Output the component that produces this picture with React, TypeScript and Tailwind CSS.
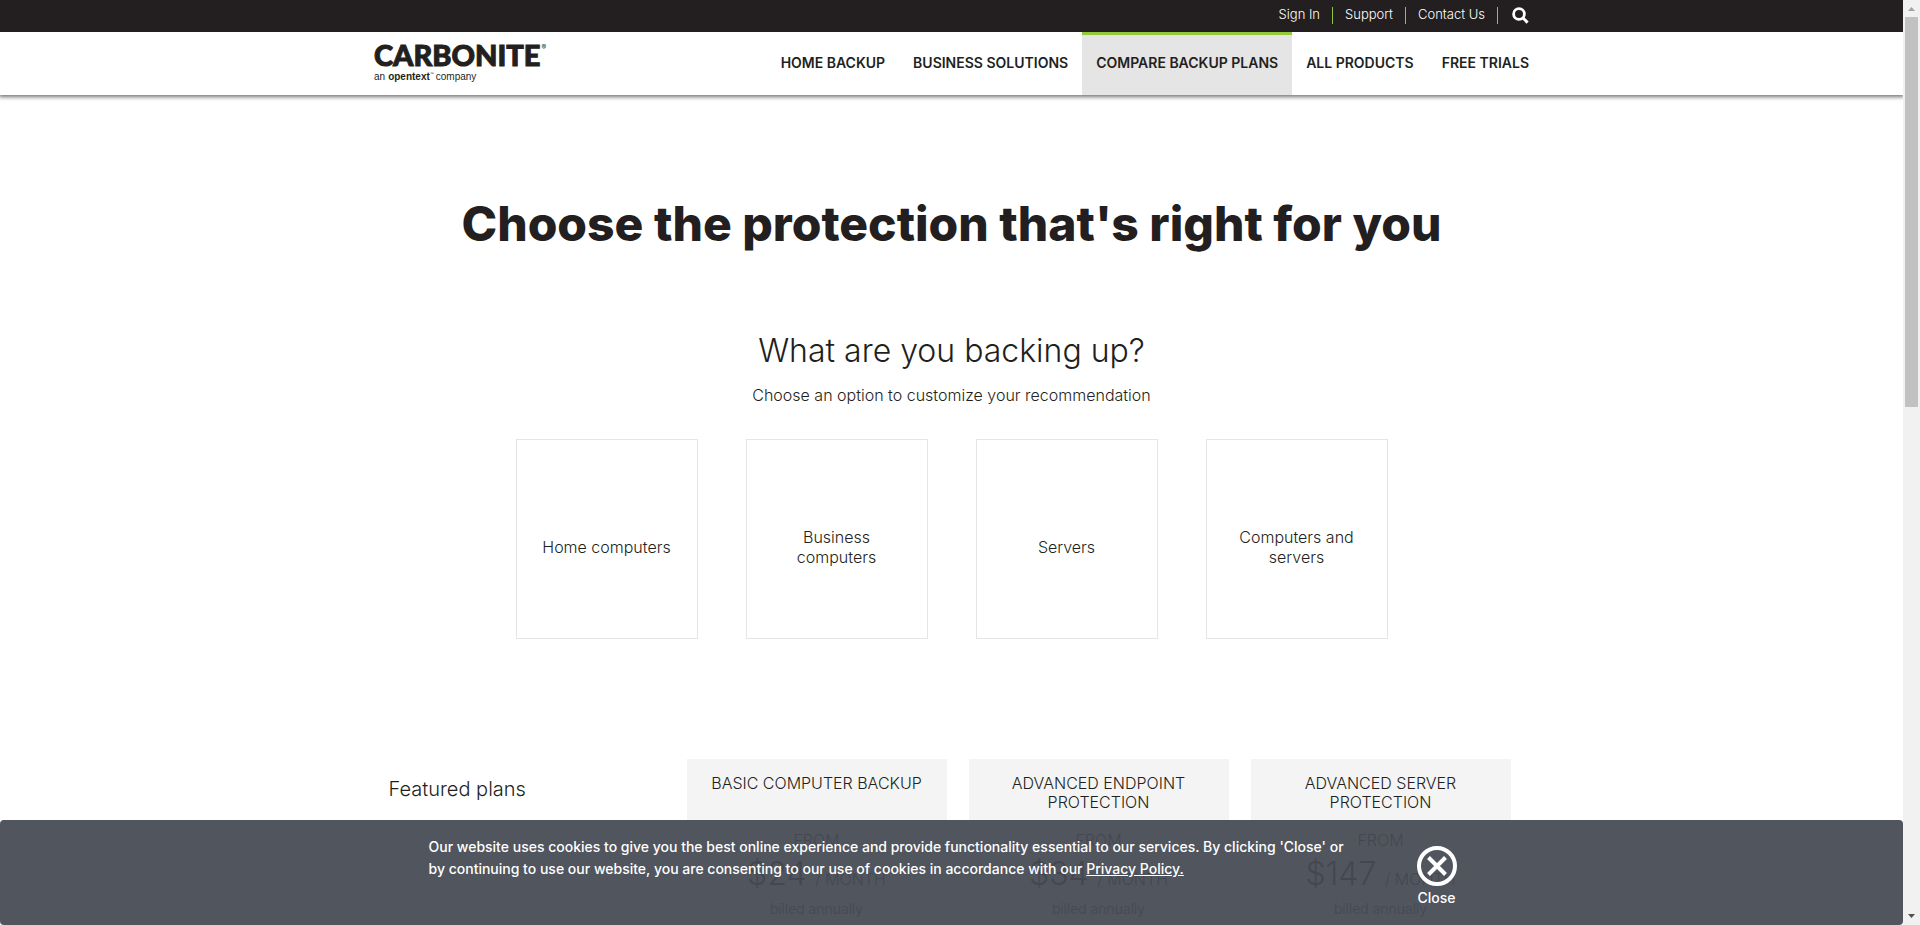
const topLinks = ["Sign In", "Support", "Contact Us"];

const navItems = [
  { label: "HOME BACKUP", active: false },
  { label: "BUSINESS SOLUTIONS", active: false },
  { label: "COMPARE BACKUP PLANS", active: true },
  { label: "ALL PRODUCTS", active: false },
  { label: "FREE TRIALS", active: false },
];

const options = ["Home computers", "Business computers", "Servers", "Computers and servers"];

const plans = [
  { name: "BASIC COMPUTER BACKUP", price: "$24" },
  { name: "ADVANCED ENDPOINT PROTECTION", price: "$34" },
  { name: "ADVANCED SERVER PROTECTION", price: "$147" },
];

function Logo() {
  return (
    <a href="#" className="flex flex-col pt-2 text-[#231f20]">
      <span className="flex items-start">
        <span className="font-['Lato',sans-serif] text-[29px] leading-[30px] font-black [-webkit-text-stroke:1px_#231f20]">
          CARBONITE
        </span>
        <span className="pt-1 pl-px text-[7px] leading-[7px]">®</span>
      </span>
      <span className="flex font-['Liberation_Sans',sans-serif] text-[10px] leading-[14px]">
        an <b className="pl-[3px]">opentext</b>
        <span className="pt-[2px] pr-[2px] text-[4px] leading-none">™</span> company
      </span>
    </a>
  );
}

function Header() {
  return (
    <header className="relative shadow-[0_1px_4px_1px_rgba(0,0,0,0.55)]">
      <div className="bg-[#231f20]">
        <div className="mx-auto flex h-8 max-w-[1155px] items-center justify-end pb-px">
          {topLinks.map((label) => (
            <a
              key={label}
              href="#"
              className="mr-3 flex h-[17px] items-center border-r border-[#8dc63f] pr-3 pb-[2px] text-[13px] font-light text-white"
            >
              {label}
            </a>
          ))}
          <button aria-label="Search" className="ml-[2px]">
            <svg className="size-[17px]" viewBox="0 0 17 17" fill="none" stroke="#fff">
              <circle cx="7" cy="7" r="5.4" strokeWidth="2.8" />
              <path d="M11 11l4.6 4.6" strokeWidth="3" />
            </svg>
          </button>
        </div>
      </div>
      <div className="bg-white">
        <div className="mx-auto flex h-[63px] max-w-[1155px] justify-between">
          <Logo />
          <nav className="-mr-[14px] flex">
            {navItems.map((item) => (
              <a
                key={item.label}
                href="#"
                className={
                  "flex items-center border-t-3 px-[14px] pb-1 text-sm font-semibold text-[#231f20] " +
                  (item.active ? "border-[#97c93d] bg-[#e5e5e5]" : "border-transparent")
                }
              >
                {item.label}
              </a>
            ))}
          </nav>
        </div>
      </div>
    </header>
  );
}

function CookieBar() {
  return (
    <section
      aria-label="Cookie notice"
      className="absolute inset-x-0 bottom-0 flex h-[105px] justify-center gap-[84px] rounded bg-[rgb(70,74,84)]/94 pt-4 pr-[18px] text-sm font-medium text-white"
    >
      <p className="w-[904px] leading-[22px] whitespace-nowrap">
        Our website uses cookies to give you the best online experience and provide functionality essential to our
        services. By clicking 'Close' or
        <br />
        by continuing to use our website, you are consenting to our use of cookies in accordance with our{" "}
        <a href="#" className="underline">
          Privacy Policy.
        </a>
      </p>
      <button className="flex flex-col items-center gap-[2px] pt-[10px]">
        <svg className="size-10" viewBox="0 0 40 40" fill="none" stroke="#fff">
          <circle cx="20" cy="20" r="18" strokeWidth="4" />
          <path d="M11.5 11.5l17 17M28.5 11.5l-17 17" strokeWidth="4" />
        </svg>
        Close
      </button>
    </section>
  );
}

function ScrollBar() {
  return (
    <div aria-hidden="true" className="flex w-[17px] shrink-0 flex-col items-center bg-[#f1f1f1]">
      <svg className="h-[17px] w-[17px] shrink-0" viewBox="0 0 17 17">
        <path d="M5 11h7L8.5 7z" fill="#a3a3a3" />
      </svg>
      <div className="h-[390px] w-[13px] bg-[#c1c1c1]" />
      <svg className="mt-auto h-[17px] w-[17px] shrink-0" viewBox="0 0 17 17">
        <path d="M5 6h7L8.5 10z" fill="#505050" />
      </svg>
    </div>
  );
}

export default function App() {
  return (
    <div className="flex h-screen bg-white font-['Inter',sans-serif] text-[#231f20]">
      <div className="relative min-w-0 flex-1 overflow-hidden">
        <Header />
        <main className="text-center font-light">
          <h1 className="pt-[99px] text-[48px] leading-[60px] font-extrabold">Choose the protection that's right for you</h1>
          <section className="pt-[77px]">
            <h2 className="text-[32px] leading-10">What are you backing up?</h2>
            <p className="pt-3 text-base leading-6">Choose an option to customize your recommendation</p>
            <div className="flex justify-center gap-12 pt-8">
              {options.map((label) => (
                <button
                  key={label}
                  className="flex h-[200px] w-[182px] items-center justify-center border border-[#e5e5e5] px-5 pt-4 text-base leading-5 font-light text-[#231f20]"
                >
                  {label}
                </button>
              ))}
            </div>
          </section>
          <section className="mx-auto flex max-w-[1126px] pt-[120px] pr-1">
            <h3 className="flex-1 pt-4 text-left text-xl leading-7">Featured plans</h3>
            <div className="flex gap-[22px]">
              {plans.map((plan) => (
                <article key={plan.name} className="flex h-[400px] w-[260px] flex-col items-center bg-[#f4f4f4] pt-[15px]">
                  <h4 className="h-[56px] px-5 text-base leading-[19px]">{plan.name}</h4>
                  <p className="text-base leading-5">FROM</p>
                  <p className="pt-1 text-base leading-10">
                    <span className="mr-1 text-[32px]">{plan.price}</span> / MONTH
                  </p>
                  <p className="text-sm leading-5">billed annually</p>
                </article>
              ))}
            </div>
          </section>
        </main>
        <CookieBar />
      </div>
      <ScrollBar />
    </div>
  );
}
